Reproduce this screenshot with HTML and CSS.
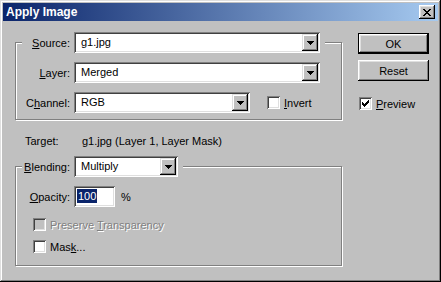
FILE: index.html
```html
<!DOCTYPE html>
<html lang="en">
<head>
    <meta charset="UTF-8">
    <title>Apply Image</title>
    <link rel="stylesheet" href="styles.css">
</head>
<body>
    <div class="dialog">
        <div class="titlebar">
            <span class="title">Apply Image</span>
            <span class="close">
                <svg width="8" height="7" viewBox="0 0 8 7"><path d="M0 0h2v1h-2zM6 0h2v1h-2zM1 1h2v1h-2zM5 1h2v1h-2zM2 2h4v1h-4zM3 3h2v1h-2zM2 4h4v1h-4zM1 5h2v1h-2zM5 5h2v1h-2zM0 6h2v1h-2zM6 6h2v1h-2z"/></svg>
            </span>
        </div>
        <div class="content">
            <div class="main">
                <fieldset class="group group-source">
                    <legend>
                        <div class="row">
                            <span class="lbl"><u>S</u>ource:</span>
                            <div class="combo combo-wide">
                                <span class="combo-text">g1.jpg</span>
                                <span class="combo-btn"><svg width="7" height="4" viewBox="0 0 7 4"><path d="M0 0h7v1h-1v1h-1v1h-1v1h-1v-1h-1v-1h-1v-1h-1z"/></svg></span>
                            </div>
                        </div>
                    </legend>
                    <div class="row">
                        <span class="lbl"><u>L</u>ayer:</span>
                        <div class="combo combo-wide">
                            <span class="combo-text">Merged</span>
                            <span class="combo-btn"><svg width="7" height="4" viewBox="0 0 7 4"><path d="M0 0h7v1h-1v1h-1v1h-1v1h-1v-1h-1v-1h-1v-1h-1z"/></svg></span>
                        </div>
                    </div>
                    <div class="row">
                        <span class="lbl">C<u>h</u>annel:</span>
                        <div class="combo combo-mid">
                            <span class="combo-text">RGB</span>
                            <span class="combo-btn"><svg width="7" height="4" viewBox="0 0 7 4"><path d="M0 0h7v1h-1v1h-1v1h-1v1h-1v-1h-1v-1h-1v-1h-1z"/></svg></span>
                        </div>
                        <span class="box invert-box"></span>
                        <span class="check-lbl"><u>I</u>nvert</span>
                    </div>
                </fieldset>

                <div class="target">
                    <span class="target-lbl">Target:</span>
                    <span>g1.jpg (Layer 1, Layer Mask)</span>
                </div>

                <fieldset class="group group-blend">
                    <legend>
                        <div class="row">
                            <span class="lbl"><u>B</u>lending:</span>
                            <div class="combo combo-short">
                                <span class="combo-text">Multiply</span>
                                <span class="combo-btn"><svg width="7" height="4" viewBox="0 0 7 4"><path d="M0 0h7v1h-1v1h-1v1h-1v1h-1v-1h-1v-1h-1v-1h-1z"/></svg></span>
                            </div>
                        </div>
                    </legend>
                    <div class="row">
                        <span class="lbl"><u>O</u>pacity:</span>
                        <div class="field"><span class="selected">100</span></div>
                        <span class="unit">%</span>
                    </div>
                    <div class="check-row check-first">
                        <span class="box disabled"></span>
                        <span class="check-lbl muted">Preserve <u>T</u>ransparency</span>
                    </div>
                    <div class="check-row">
                        <span class="box"></span>
                        <span class="check-lbl">Mas<u>k</u>...</span>
                    </div>
                </fieldset>
            </div>

            <div class="side">
                <button class="btn btn-default">OK</button>
                <button class="btn">Reset</button>
                <div class="check-row preview">
                    <span class="box">
                        <svg width="7" height="7" viewBox="0 0 7 7"><path d="M6 0h1v1h-1zM5 1h2v1h-2zM0 2h1v1h-1zM4 2h3v1h-3zM0 3h2v1h-2zM3 3h3v1h-3zM0 4h5v1h-5zM1 5h3v1h-3zM2 6h1v1h-1z"/></svg>
                    </span>
                    <span class="check-lbl"><u>P</u>review</span>
                </div>
            </div>
        </div>
    </div>
</body>
</html>
```

FILE: styles.css
```css
* {
    box-sizing: border-box;
}
body {
    margin: 0;
    font-family: "Liberation Sans", Arial, sans-serif;
    font-size: 11px;
    color: #000;
}
.dialog {
    width: 441px;
    height: 282px;
    padding: 3px;
    background: #c0c0c0;
    box-shadow: inset -1px -1px #000, inset 1px 1px #dfdfdf, inset -2px -2px #808080, inset 2px 2px #fff;
    display: flex;
    flex-direction: column;
}
.titlebar {
    height: 18px;
    display: flex;
    align-items: center;
    justify-content: space-between;
    padding: 0 3px 0 3px;
    background: linear-gradient(to right, #0a246a, #a6caf0);
}
.title {
    color: #fff;
    font-weight: bold;
    font-size: 12px;
}
.close {
    width: 16px;
    height: 14px;
    display: flex;
    align-items: center;
    justify-content: center;
    background: #c0c0c0;
    box-shadow: inset -1px -1px #000, inset 1px 1px #fff, inset -2px -2px #808080, inset 2px 2px #dfdfdf;
}
.content {
    display: flex;
    flex: 1;
}
.main {
    margin-left: 12px;
    width: 327px;
}

/* etched group boxes, first row sits on the top edge */
.group {
    margin: 0;
    min-width: 0;
    border: 1px solid #808080;
    box-shadow: inset 1px 1px #fff, 1px 1px #fff;
    padding: 9px 5px 6px 6px;
}
.group legend {
    padding: 0 5px 0 0;
    background: #c0c0c0;
}
.group-source {
    margin-top: 11px;
}
.group-blend {
    margin-top: 8px;
    padding-bottom: 12px;
}
.row {
    display: flex;
    align-items: center;
    height: 21px;
}
.group > .row + .row {
    margin-top: 9px;
}
.lbl {
    width: 48px;
    margin-right: 4px;
    text-align: right;
    white-space: nowrap;
}

/* combo boxes */
.combo {
    height: 21px;
    display: flex;
    padding: 2px;
    background: #fff;
    box-shadow: inset 1px 1px #808080, inset -1px -1px #fff, inset 2px 2px #404040, inset -2px -2px #dfdfdf;
}
.combo-wide {
    width: 246px;
}
.combo-mid {
    width: 176px;
}
.combo-short {
    width: 104px;
}
.combo-text {
    flex: 1;
    padding-left: 5px;
    line-height: 17px;
}
.combo-btn {
    width: 16px;
    height: 17px;
    display: flex;
    align-items: center;
    justify-content: center;
    background: #c0c0c0;
    box-shadow: inset -1px -1px #000, inset 1px 1px #dfdfdf, inset -2px -2px #808080, inset 2px 2px #fff;
}
.field {
    width: 41px;
    height: 21px;
    padding: 2px 3px;
    background: #fff;
    line-height: 17px;
    box-shadow: inset 1px 1px #808080, inset -1px -1px #fff, inset 2px 2px #404040, inset -2px -2px #dfdfdf;
}
.selected {
    display: inline-block;
    background: #0a246a;
    color: #fff;
    padding: 0 1px;
    line-height: 14px;
}
.unit {
    margin-left: 6px;
}

/* check boxes */
.box {
    width: 13px;
    height: 13px;
    flex: none;
    display: flex;
    align-items: center;
    justify-content: center;
    background: #fff;
    box-shadow: inset 1px 1px #808080, inset -1px -1px #fff, inset 2px 2px #404040, inset -2px -2px #dfdfdf;
}
.box.disabled {
    background: #c0c0c0;
}
.invert-box {
    margin-left: 17px;
}
.check-lbl {
    margin-left: 4px;
}
.muted {
    color: #808080;
    text-shadow: 1px 1px #fff;
}
.check-row {
    display: flex;
    align-items: center;
    height: 13px;
    margin-top: 9px;
    margin-left: 11px;
}
.check-row.check-first {
    margin-top: 11px;
}

.target {
    display: flex;
    margin-top: 15px;
    padding-left: 10px;
    line-height: 13px;
}
.target-lbl {
    width: 57px;
}

/* right column */
.side {
    margin-left: 16px;
    width: 71px;
    padding-top: 12px;
    display: flex;
    flex-direction: column;
}
.btn {
    height: 21px;
    width: 71px;
    border: none;
    padding: 0;
    font: inherit;
    color: #000;
    background: #c0c0c0;
    box-shadow: inset -1px -1px #000, inset 1px 1px #fff, inset -2px -2px #808080, inset 2px 2px #dfdfdf;
}
.btn + .btn {
    margin-top: 6px;
}
.btn-default {
    border: 1px solid #000;
}
.preview {
    margin-top: 16px;
    margin-left: 1px;
}
```
